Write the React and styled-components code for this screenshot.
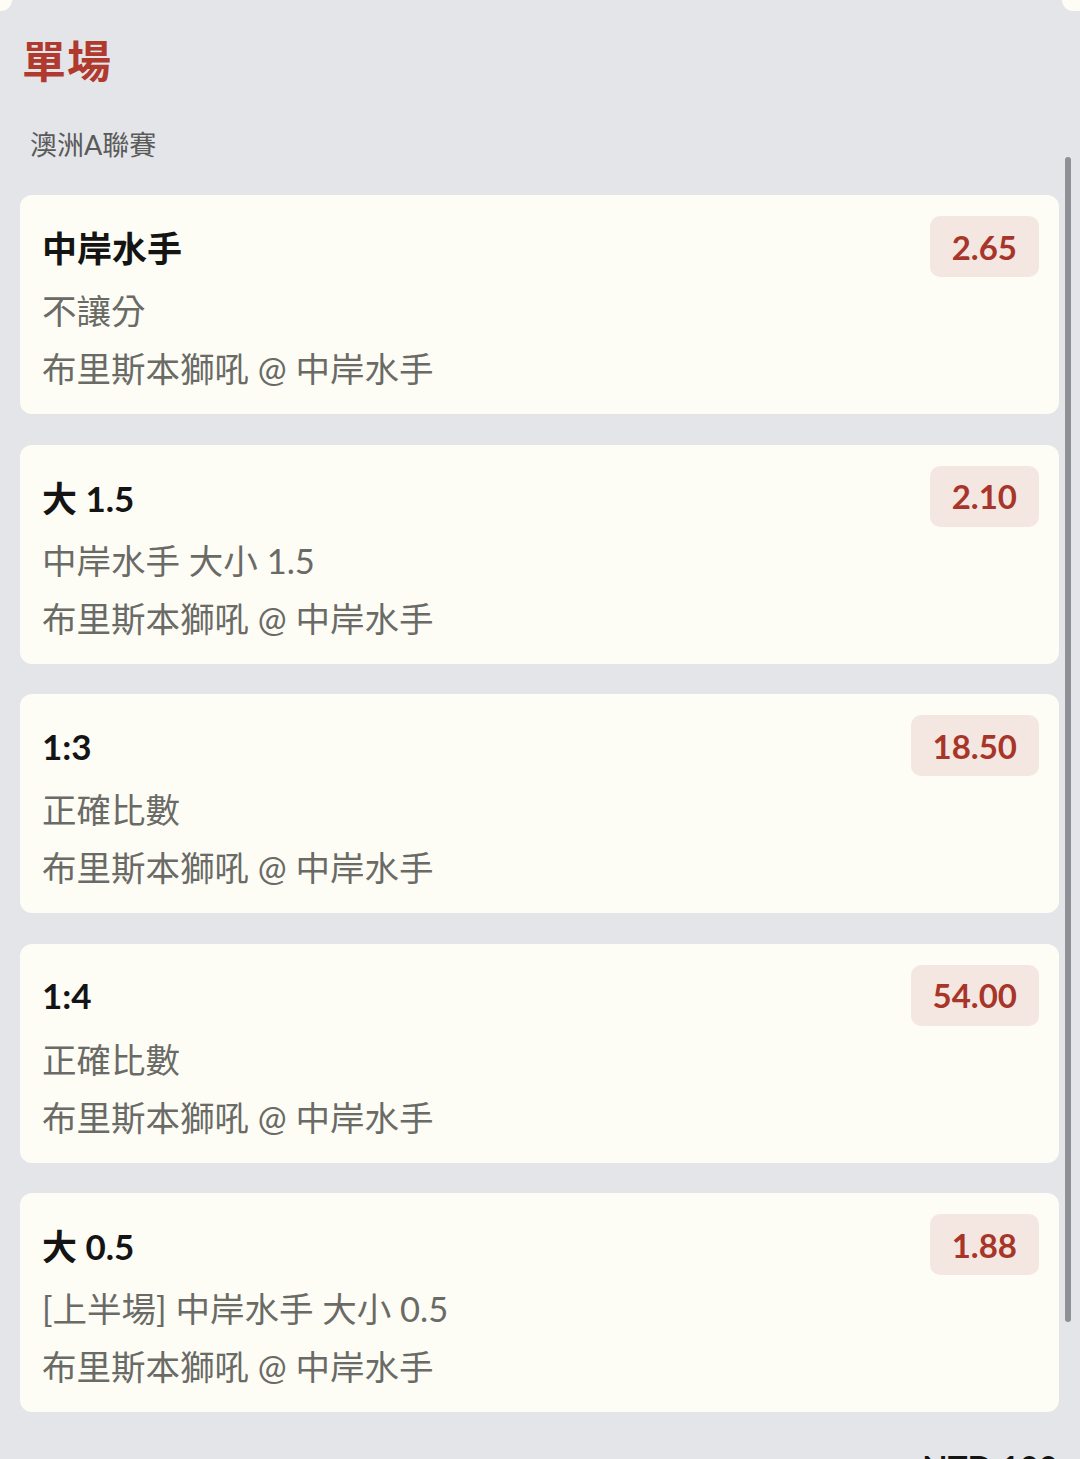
import React from "react";
import styled, {createGlobalStyle} from "styled-components";

const GlobalStyle = createGlobalStyle`
  body {
    margin: 0;
    background: #e4e5e9;
    font-family: Lato, "Noto Sans CJK TC", sans-serif;
  }
`
const Page = styled.div`
  width: 1080px;
  height: 1459px;
  overflow: hidden;
`
const StubRow = styled.div`
  display: flex;
  justify-content: space-between;
  height: 11px;
`
const Stub = styled.div`
  width: ${p => p.w}px;
  background: #fdfdf5;
  border-bottom-${p => p.side}-radius: 12px;
`
const Title = styled.h1`
  margin: 0;
  padding: 17px 0 0 22px;
  font-size: 44px;
  line-height: 66px;
  font-weight: 700;
  color: #b03a2e;
  letter-spacing: 1px;
`
const League = styled.div`
  padding: 34px 0 0 30px;
  font-size: 27px;
  line-height: 34px;
  color: #5a5a5a;
`
const ListWrap = styled.div`
  position: relative;
  margin-top: 33px;
`
const List = styled.div`
  display: flex;
  flex-direction: column;
  gap: 30.5px;
  padding: 0 21px 0 20px;
`
const ScrollThumb = styled.div`
  position: absolute;
  left: 1065px;
  top: -38px;
  width: 6px;
  height: 1165px;
  border-radius: 3px;
  background: #8f9095;
`
const Card = styled.div`
  background: #fdfdf5;
  border-radius: 12px;
  padding: 21px 20px 15px 22px;
  height: 219px;
  box-sizing: border-box;
`
const Head = styled.div`
  display: flex;
  justify-content: space-between;
  align-items: center;
  height: 61px;
  margin-bottom: 5px;
`
const Pick = styled.div`
  font-size: 35px;
  font-weight: 700;
  color: #141414;
`
const Odds = styled.div`
  height: 61px;
  padding: 0 22px;
  display: flex;
  align-items: center;
  border-radius: 10px;
  background: #f4e7e1;
  color: #a8352a;
  font-size: 33px;
  font-weight: 700;
`
const Line = styled.div`
  font-size: 34.5px;
  line-height: 58px;
  color: #6a6a66;
  white-space: pre;
`
const Footer = styled.div`
  margin-top: 35px;
  padding-right: 22px;
  text-align: right;
  font-size: 33px;
  line-height: 40px;
  font-weight: 700;
  color: #141414;
`

const bets = [
    {pick: "中岸水手", odds: "2.65", market: "不讓分"},
    {pick: "大 1.5", odds: "2.10", market: "中岸水手 大小 1.5"},
    {pick: "1:3", odds: "18.50", market: "正確比數"},
    {pick: "1:4", odds: "54.00", market: "正確比數"},
    {pick: "大 0.5", odds: "1.88", market: "[上半場] 中岸水手 大小 0.5"},
]

let App = () => {
    return (
        <Page>
            <GlobalStyle/>
            <StubRow>
                <Stub w={12} side="right"/>
                <Stub w={18} side="left"/>
            </StubRow>
            <Title>單場</Title>
            <League>澳洲A聯賽</League>
            <ListWrap>
                <List>
                    {bets.map((b, i) => (
                        <Card key={i}>
                            <Head>
                                <Pick>{b.pick}</Pick>
                                <Odds>{b.odds}</Odds>
                            </Head>
                            <Line>{b.market}</Line>
                            <Line>布里斯本獅吼 @ 中岸水手</Line>
                        </Card>
                    ))}
                </List>
                <ScrollThumb/>
            </ListWrap>
            <Footer>NTD 100</Footer>
        </Page>
    )
}
export default App;
